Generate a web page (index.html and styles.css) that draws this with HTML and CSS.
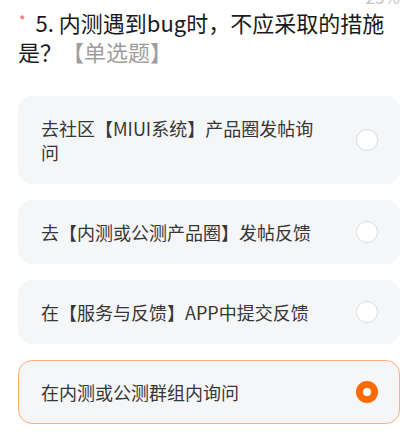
FILE: index.html
```html
<!DOCTYPE html>
<html lang="zh-CN">
<head>
<meta charset="utf-8">
<link rel="stylesheet" href="styles.css">
</head>
<body>
<div class="page">
  <div class="progress">25%</div>
  <div class="question"><span class="req">*</span>5. 内测遇到bug时，不应采取的措施是？<span class="type">【单选题】</span></div>
  <div class="options">
    <div class="option">
      <div class="label">去社区【MIUI系统】产品圈发帖询问</div>
      <span class="radio"></span>
    </div>
    <div class="option">
      <div class="label">去【内测或公测产品圈】发帖反馈</div>
      <span class="radio"></span>
    </div>
    <div class="option">
      <div class="label">在【服务与反馈】APP中提交反馈</div>
      <span class="radio"></span>
    </div>
    <div class="option selected">
      <div class="label">在内测或公测群组内询问</div>
      <span class="radio"></span>
    </div>
  </div>
</div>
</body>
</html>
```

FILE: styles.css
```css
* { box-sizing: border-box; }
html, body { margin: 0; padding: 0; background: #ffffff; }
body {
  font-family: "Noto Sans CJK SC", "Noto Sans", sans-serif;
  overflow: hidden;
}
.page {
  padding: 0 14px 0 18px;
}
.progress {
  margin-top: -13px;
  height: 20px;
  line-height: 20px;
  font-size: 17px;
  color: #c4c4c4;
  text-align: right;
}
.question {
  margin-top: 1px;
  font-size: 22px;
  line-height: 29px;
  color: #1a1a1a;
  padding-right: 6px;
}
.req {
  color: #f4605a;
  font-size: 14px;
  line-height: 14px;
  vertical-align: 6px;
  margin-right: 10px;
  margin-left: 1px;
}
.type {
  color: #9e9e9e;
}
.options {
  margin-top: 30px;
  display: flex;
  flex-direction: column;
  gap: 16px;
}
.option {
  display: flex;
  align-items: center;
  background: #f5f6f8;
  border: 1px solid transparent;
  border-radius: 14px;
  padding: 19px 21px 19px 22px;
}
.option.selected {
  border-color: #ffae78;
}
.label {
  flex: 1;
  font-size: 18px;
  line-height: 24px;
  color: #363636;
  padding-right: 40px;
}
.radio {
  flex: none;
  width: 22px;
  height: 22px;
  border-radius: 50%;
  background: #ffffff;
  border: 1px solid #dcdcdc;
}
.option.selected .radio {
  border: 7px solid #ff6a00;
  background: #ffffff;
}
```
